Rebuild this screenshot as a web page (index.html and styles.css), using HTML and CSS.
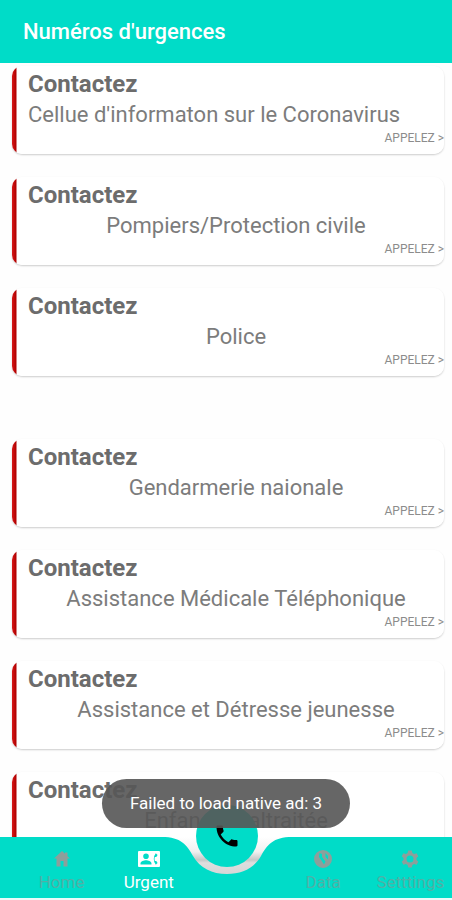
FILE: index.html
```html
<!DOCTYPE html>
<html lang="fr">
<head>
<meta charset="utf-8">
<meta name="viewport" content="width=device-width, initial-scale=1">
<title>Numéros d'urgences</title>
<link rel="stylesheet" href="styles.css">
</head>
<body>
<header class="topbar"><h1>Numéros d'urgences</h1></header>
<main class="list">
  <section class="group">
    <article class="card"><h2>Contactez</h2><p class="start">Cellue d'informaton sur le Coronavirus</p><a href="#appel">APPELEZ &gt;</a></article>
    <article class="card"><h2>Contactez</h2><p>Pompiers/Protection civile</p><a href="#appel">APPELEZ &gt;</a></article>
    <article class="card"><h2>Contactez</h2><p>Police</p><a href="#appel">APPELEZ &gt;</a></article>
  </section>
  <section class="group">
    <article class="card"><h2>Contactez</h2><p>Gendarmerie naionale</p><a href="#appel">APPELEZ &gt;</a></article>
    <article class="card"><h2>Contactez</h2><p>Assistance Médicale Téléphonique</p><a href="#appel">APPELEZ &gt;</a></article>
    <article class="card"><h2>Contactez</h2><p>Assistance et Détresse jeunesse</p><a href="#appel">APPELEZ &gt;</a></article>
    <article class="card"><h2>Contactez</h2><p>Enfance maltraitée</p></article>
  </section>
</main>
<nav class="tabs">
  <svg class="notch" width="140" height="50" viewBox="0 0 140 50" aria-hidden="true">
    <defs>
      <linearGradient id="shade" x1="0" y1="0" x2="0" y2="1">
        <stop offset="0" stop-color="#fff"/><stop offset=".4" stop-color="#f0f0f0"/><stop offset=".62" stop-color="#c4c8c7"/><stop offset=".7" stop-color="#dedede"/><stop offset="1" stop-color="#d6d6d6"/>
      </linearGradient>
    </defs>
    <path fill="url(#shade)" d="M5 0C24 0 30 8 36 19C43 31 55 37 70 37C85 37 97 31 104 19C110 8 116 0 135 0Z"/>
  </svg>
  <a class="tab" href="#home">
    <svg width="24" height="24" viewBox="0 0 24 24" aria-hidden="true"><path d="M12 4L4 11.500H6.500V19.500H10.500V14H13.500V19.500H17.500V11.500H20L17.500 9.200V5.500H15V6.800Z"/></svg>
    <span>Home</span></a>
  <a class="tab active" href="#urgent" aria-current="page">
    <svg width="24" height="24" viewBox="0 0 24 24" aria-hidden="true"><path fill-rule="evenodd" d="M2 4H22Q23 4 23 5V19Q23 20 22 20H2Q1 20 1 19V5Q1 4 2 4ZM9 6.500A2.800 2.800 0 1 0 9 12.100A2.800 2.800 0 1 0 9 6.500ZM3.500 17.500H14.500V16.500C14.500 14.500 11 13.300 9 13.300S3.500 14.500 3.500 16.500ZM17.800 14A7 7 0 0 1 17.800 10H19.300L20.600 8L18.800 6.300A9 9 0 0 0 18.800 17.700L20.600 16L19.300 14Z"/></svg>
    <span>Urgent</span></a>
  <button class="fab" type="button" aria-label="Appeler">
    <svg width="28" height="28" viewBox="0 0 24 24" aria-hidden="true"><path d="M6.600 10.800C8.100 13.600 10.400 15.900 13.200 17.400L15.400 15.200C15.700 14.900 16.100 14.800 16.400 14.900C17.600 15.300 18.800 15.500 20 15.500C20.600 15.500 21 15.900 21 16.500V20C21 20.600 20.600 21 20 21C10.600 21 3 13.400 3 4C3 3.400 3.400 3 4 3H7.500C8.100 3 8.500 3.400 8.500 4C8.500 5.300 8.700 6.500 9.100 7.600C9.200 7.900 9.100 8.300 8.800 8.600Z"/></svg>
  </button>
  <a class="tab" href="#data">
    <svg width="24" height="24" viewBox="0 0 24 24" aria-hidden="true"><path fill-rule="evenodd" d="M12 3A9 9 0 1 0 12 21A9 9 0 1 0 12 3ZM8.500 6L11 7V10L14.500 14.500L13 17.500L10.500 13.500L8 10ZM14.500 6L17 9V12.500L14.500 10Z"/></svg>
    <span>Data</span></a>
  <a class="tab" href="#settings">
    <svg width="24" height="24" viewBox="0 0 24 24" aria-hidden="true"><path fill-rule="evenodd" d="M10.200 3.500H13.800L14.400 6L16.100 7L18.600 6.200L20.300 9.300L18.500 11V13L20.300 14.700L18.600 17.800L16.100 17L14.400 18L13.800 20.500H10.200L9.600 18L7.900 17L5.400 17.800L3.700 14.700L5.500 13V11L3.700 9.300L5.400 6.200L7.900 7L9.600 6ZM12 8.500A3.500 3.500 0 1 0 12 15.500A3.500 3.500 0 1 0 12 8.500Z"/></svg>
    <span>Setttings</span></a>
</nav>
<div class="toast" role="status">Failed to load native ad: 3</div>
</body>
</html>
```
FILE: styles.css
```css
* { box-sizing: border-box; }
body {
  margin: 0;
  height: 100vh;
  display: flex;
  flex-direction: column;
  overflow: hidden;
  position: relative;
  background: #fefefe;
  color: #6c6c6c;
  font-family: Roboto, "Liberation Sans", sans-serif;
}
h1, h2, p { margin: 0; }
a { color: inherit; text-decoration: none; }
.topbar {
  flex: none;
  height: 63px;
  padding: 0 23px;
  display: flex;
  align-items: center;
  background: #00dcc8;
  color: #fff;
}
.topbar h1 { font-size: 22px; line-height: 28px; font-weight: 500; }
.list {
  flex: 1;
  min-height: 0;
  overflow: hidden;
  padding: 3px 8px 0 12px;
  display: flex;
  flex-direction: column;
  gap: 63px;
}
.group { display: flex; flex-direction: column; gap: 23px; }
.card {
  flex: none;
  display: flex;
  flex-direction: column;
  min-height: 88px;
  padding: 4px 0 8px 16px;
  border-radius: 10px;
  background: linear-gradient(to right, #d81818, #b00000 4px, #fff 5px);
  box-shadow: 0 1px 2px #00000033;
}
.card h2 { font-size: 24px; line-height: 28px; font-weight: 700; }
.card p { font-size: 22px; line-height: 33px; text-align: center; color: #7c7c7c; }
.card .start { text-align: start; }
.card a { align-self: flex-end; font-size: 12px; line-height: 15px; color: #8c8c8c; }
.tabs {
  flex: none;
  height: 63px;
  margin-right: -2px;
  padding-left: 18px;
  display: grid;
  grid-template-columns: repeat(5, 1fr);
  position: relative;
  background: #00dcc8;
  border-bottom: 2px solid #e8fbf9;
}
.tab {
  display: flex;
  flex-direction: column;
  align-items: center;
  padding-top: 10px;
  font-size: 17px;
  line-height: 22px;
  color: #50b0a6;
}
.tab svg { fill: #8c9f9b; }
.active { color: #fff; }
.active svg { fill: #fff; }
.notch { position: absolute; top: 0; left: 50%; transform: translateX(-50%); }
.fab {
  position: absolute;
  top: -32px;
  left: 50%;
  transform: translateX(-50%);
  width: 62px;
  height: 62px;
  padding: 0;
  border: 0;
  border-radius: 50%;
  background: #00dcc8;
  display: grid;
  place-items: center;
}
.fab + .tab { grid-column: 4; }
.toast {
  position: absolute;
  bottom: 72px;
  left: 50%;
  transform: translateX(-50%);
  padding: 14px 28px;
  border-radius: 25px;
  background: #575757e8;
  color: #fff;
  font-size: 17px;
  line-height: 21px;
  white-space: nowrap;
}
```
